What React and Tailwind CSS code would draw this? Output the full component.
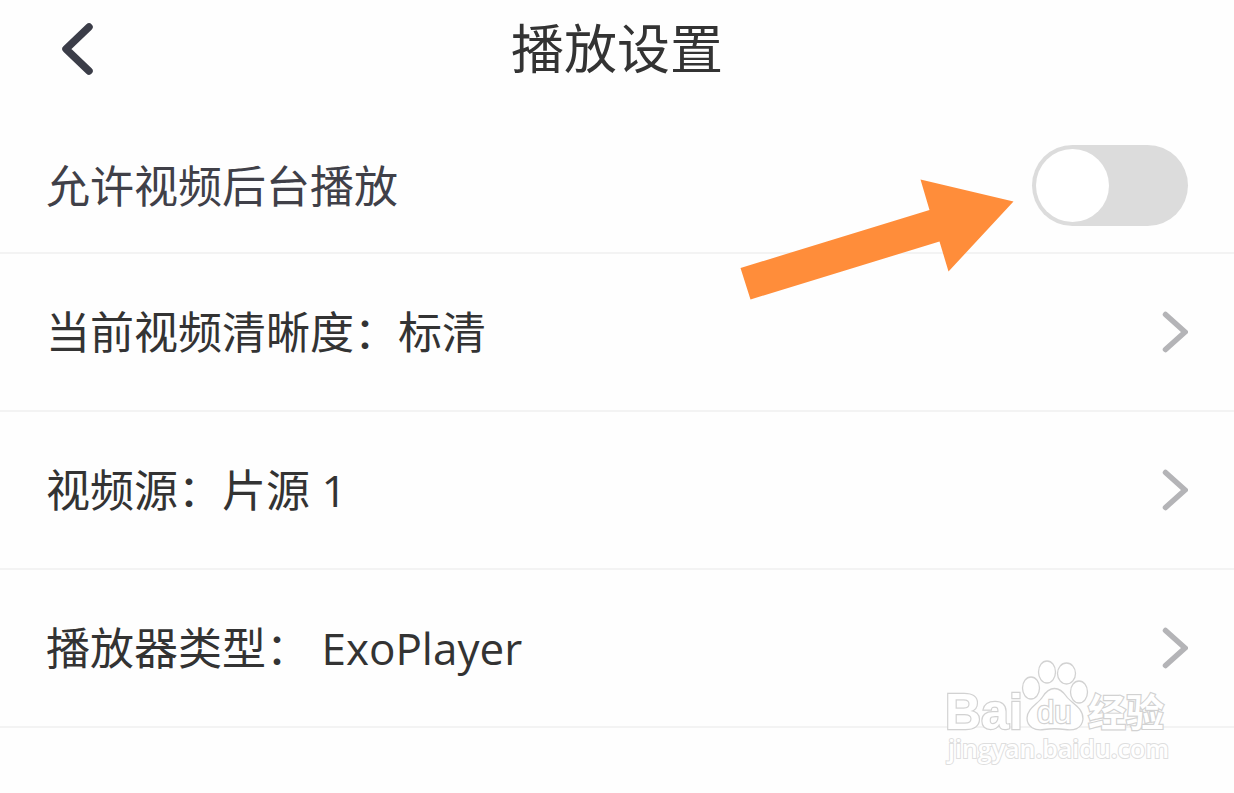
import React, { useState } from "react";

const rows = [
  { id: "quality", label: "当前视频清晰度：标清" },
  { id: "source", label: "视频源：片源 1" },
  { id: "player", label: "播放器类型： ExoPlayer" },
];

const ChevronRight = () => (
  <svg className="h-11 w-7 shrink-0" viewBox="0 0 28 44" fill="none" aria-hidden="true">
    <path d="M5.5 4.5 L25 22 L5.5 39.5" stroke="#b4b4b7" strokeWidth="5.5" strokeLinecap="round" strokeLinejoin="miter" />
  </svg>
);

// Orange arrow pointing at the switch
const HintArrow = () => (
  <svg className="pointer-events-none absolute top-[61px] right-[220px] z-10 h-[121px] w-[274px]" viewBox="0 0 274 121" aria-hidden="true">
    <polygon points="0.5,89 189.5,31 180.5,0.5 273.5,22.5 208.5,92.5 199.5,62.5 10.5,120.5" fill="#ff8d3a" />
  </svg>
);

const Watermark = () => (
  <svg
    className="pointer-events-none absolute right-[60px] bottom-[-38px] h-[110px] w-[232px]"
    viewBox="0 0 232 110"
    fill="#fff"
    stroke="#d2d2d2"
    strokeWidth="1.3"
    aria-hidden="true"
  >
    {/* paw */}
    <ellipse cx="89" cy="32" rx="8.5" ry="11" />
    <ellipse cx="105" cy="16" rx="8.5" ry="11" />
    <ellipse cx="124.5" cy="17.5" rx="9" ry="10.5" />
    <ellipse cx="137" cy="36" rx="8.5" ry="11" />
    <path d="M112.500 32.500 C118 32.500 121 35.500 124.500 40.500 C129 47 141 51 141 63 C140 73 131 75 123 73.500 C116 72.500 109 72.500 102 73.500 C93 75 85 71 85 62 C85.500 52 96 48 100.500 41 C104 35.500 107 32.500 112.500 32.500 Z" />
    <g style={{ paintOrder: "stroke" }} strokeWidth="2.4">
      <text x="3" y="73" fontSize="50" fontWeight="700" fontFamily="Liberation Sans, sans-serif">Bai</text>
      <text x="95" y="67" fontSize="31" fontFamily="Liberation Sans, sans-serif">du</text>
      <text x="146" y="70" fontSize="38" fontWeight="700" fontFamily="Noto Sans CJK SC, sans-serif">经验</text>
      <text x="6" y="102" fontSize="25" fontWeight="600" strokeWidth="2" stroke="#dedede" fontFamily="Open Sans, sans-serif">
        jingyan.baidu.com
      </text>
    </g>
  </svg>
);

const PlaybackSettings = () => {
  const [background, setBackground] = useState(false);

  return (
    <div className="min-h-screen overflow-hidden bg-[#fefefe] font-['Open_Sans','Noto_Sans_CJK_SC',sans-serif] text-[44px] leading-[60px] text-[#333333]">
      <header className="grid h-[98px] grid-cols-[1fr_auto_1fr] items-center px-[46px]">
        <button type="button" aria-label="返回" className="w-fit p-3">
          <svg className="h-14 w-9" viewBox="0 0 36 56" fill="none">
            <path d="M31 6 L8 28 L31 50" stroke="#3b3d48" strokeWidth="7.5" strokeLinecap="round" strokeLinejoin="round" />
          </svg>
        </button>
        <h1 className="text-[53px]">播放设置</h1>
      </header>

      <main className="relative pt-5">
        <div className="relative flex items-center justify-between border-b-2 border-[#f3f3f3] px-[46px]">
          <label htmlFor="background-play" className="pt-[38px] pb-9 text-[#404048]">
            允许视频后台播放
          </label>
          <input
            id="background-play"
            type="checkbox"
            role="switch"
            checked={background}
            onChange={(e) => setBackground(e.target.checked)}
            className="flex h-[81px] w-[156px] appearance-none items-center rounded-full bg-[#dcdcdc] px-1 before:size-[73px] before:rounded-full before:bg-white checked:justify-end checked:bg-[#ff8d3a]"
          />
          <HintArrow />
        </div>

        <ul>
          {rows.map((row) => (
            <li key={row.id} className="border-b-2 border-[#f3f3f3]">
              <button type="button" className="flex w-full items-center justify-between px-[46px] py-12 text-left">
                <span className="whitespace-pre">{row.label}</span>
                <ChevronRight />
              </button>
            </li>
          ))}
        </ul>
        <Watermark />
      </main>
    </div>
  );
};

export default PlaybackSettings;
